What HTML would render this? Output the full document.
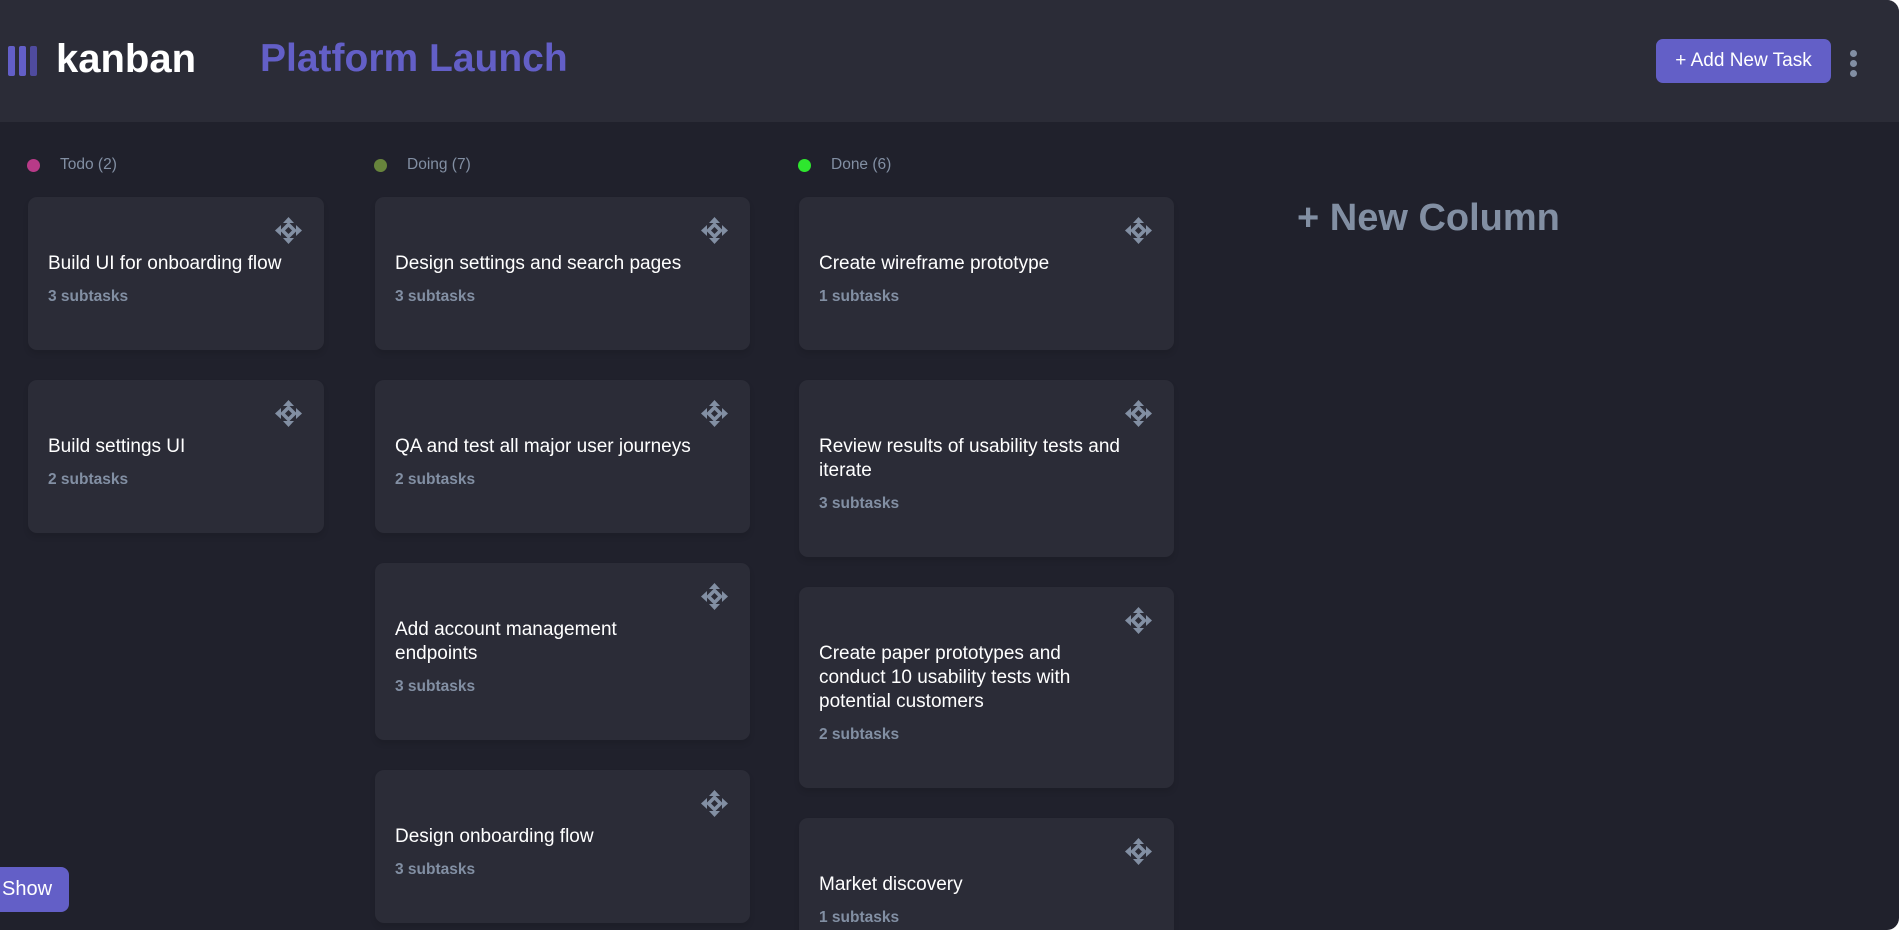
<!DOCTYPE html>
<html><head><meta charset="utf-8"><style>
*{box-sizing:border-box;margin:0;padding:0}
html,body{width:1902px;height:930px;overflow:hidden;background:#fff;font-family:"Liberation Sans",sans-serif}
.app{position:absolute;left:0;top:0;width:1899px;height:930px;background:#20212c;border-radius:0 12px 12px 0;overflow:hidden}
.hdr{position:absolute;left:0;top:0;width:100%;height:122px;background:#2b2c37}
.bars{position:absolute;left:8px;top:46px}
.bars i{position:absolute;top:0;width:7px;height:30px;border-radius:2px;background:#635fc7}
.logo{position:absolute;left:56px;top:37px;font-size:40px;font-weight:bold;color:#fff}
.title{position:absolute;left:260px;top:37px;font-size:39px;font-weight:bold;color:#635fc7}
.btn{position:absolute;left:1656px;top:39px;width:175px;height:44px;border-radius:7px;background:#635fc7;color:#fff;font-size:19px;line-height:44px;text-align:center}
.dots{position:absolute;left:1850px;top:50px}
.dots i{display:block;width:7px;height:7px;border-radius:50%;background:#828fa3;margin-bottom:3px}
.col{position:absolute;top:0}
.ch{position:absolute;top:156px;font-size:15.5px;color:#828fa3;white-space:nowrap}
.ch b{position:absolute;top:3px;width:13px;height:13px;border-radius:50%}
.cards{position:absolute;top:197px;left:0;display:flex;flex-direction:column;gap:30px}
.card{position:relative;background:#2b2c37;border-radius:9px;padding:55px 20px 41px;box-shadow:0 4px 6px rgba(0,0,0,.1)}
.card h3{font-weight:normal;color:#fff;font-size:19px;line-height:24px}
.card p{margin-top:9px;font-size:15.5px;line-height:24px;font-weight:bold;color:#828fa3}
.card svg{position:absolute;right:22px;top:20px}
.newcol{position:absolute;left:1297px;top:197px;font-size:38px;font-weight:bold;color:#828fa3}
.show{position:absolute;left:0;top:867px;width:69px;height:45px;background:#635fc7;border-radius:0 8px 8px 0;color:#fff;font-size:20px;line-height:45px;padding-left:2px}
</style></head><body>
<div class="app">
<div class="hdr">
<div class="bars"><i style="left:0"></i><i style="left:11px"></i><i style="left:22px;background:#4f4b9e"></i></div>
<div class="logo">kanban</div>
<div class="title">Platform Launch</div>
<div class="btn">+ Add New Task</div>
<div class="dots"><i></i><i></i><i></i></div>
</div>

<svg width="0" height="0" style="position:absolute"><defs><symbol id="mv" viewBox="0 0 27 27"><g fill="#828fa3"><path d="M13.5 0L19 6H8z"/><path d="M13.5 27L19 21H8z"/><path d="M0 13.5L6 8V19z"/><path d="M27 13.5L21 8V19z"/><path d="M13.5 5L22 13.5 13.5 22 5 13.5z"/></g><path d="M13.5 10L17 13.5 13.5 17 10 13.5z" fill="#2b2c37"/></symbol></defs></svg>

<div class="col" style="left:28px;width:296px">
<div class="ch" style="left:0"><b style="left:-1px;background:#b83a88"></b><span style="margin-left:32px">Todo (2)</span></div>
<div class="cards" style="width:296px">
<div class="card"><svg width="27" height="27"><use href="#mv"/></svg><h3>Build UI for onboarding flow</h3><p>3 subtasks</p></div>
<div class="card"><svg width="27" height="27"><use href="#mv"/></svg><h3>Build settings UI</h3><p>2 subtasks</p></div>
</div></div>

<div class="col" style="left:375px;width:375px">
<div class="ch"><b style="left:-1px;background:#67843c"></b><span style="margin-left:32px">Doing (7)</span></div>
<div class="cards" style="width:375px">
<div class="card"><svg width="27" height="27"><use href="#mv"/></svg><h3>Design settings and search pages</h3><p>3 subtasks</p></div>
<div class="card"><svg width="27" height="27"><use href="#mv"/></svg><h3>QA and test all major user journeys</h3><p>2 subtasks</p></div>
<div class="card"><svg width="27" height="27"><use href="#mv"/></svg><h3>Add account management<br>endpoints</h3><p>3 subtasks</p></div>
<div class="card"><svg width="27" height="27"><use href="#mv"/></svg><h3>Design onboarding flow</h3><p>3 subtasks</p></div>
</div></div>

<div class="col" style="left:799px;width:375px">
<div class="ch"><b style="left:-1px;background:#2ee62e"></b><span style="margin-left:32px">Done (6)</span></div>
<div class="cards" style="width:375px">
<div class="card"><svg width="27" height="27"><use href="#mv"/></svg><h3>Create wireframe prototype</h3><p>1 subtasks</p></div>
<div class="card"><svg width="27" height="27"><use href="#mv"/></svg><h3>Review results of usability tests and<br>iterate</h3><p>3 subtasks</p></div>
<div class="card"><svg width="27" height="27"><use href="#mv"/></svg><h3>Create paper prototypes and<br>conduct 10 usability tests with<br>potential customers</h3><p>2 subtasks</p></div>
<div class="card"><svg width="27" height="27"><use href="#mv"/></svg><h3>Market discovery</h3><p>1 subtasks</p></div>
</div></div>

<div class="newcol">+ New Column</div>
<div class="show">Show</div>
</div>
</body></html>
